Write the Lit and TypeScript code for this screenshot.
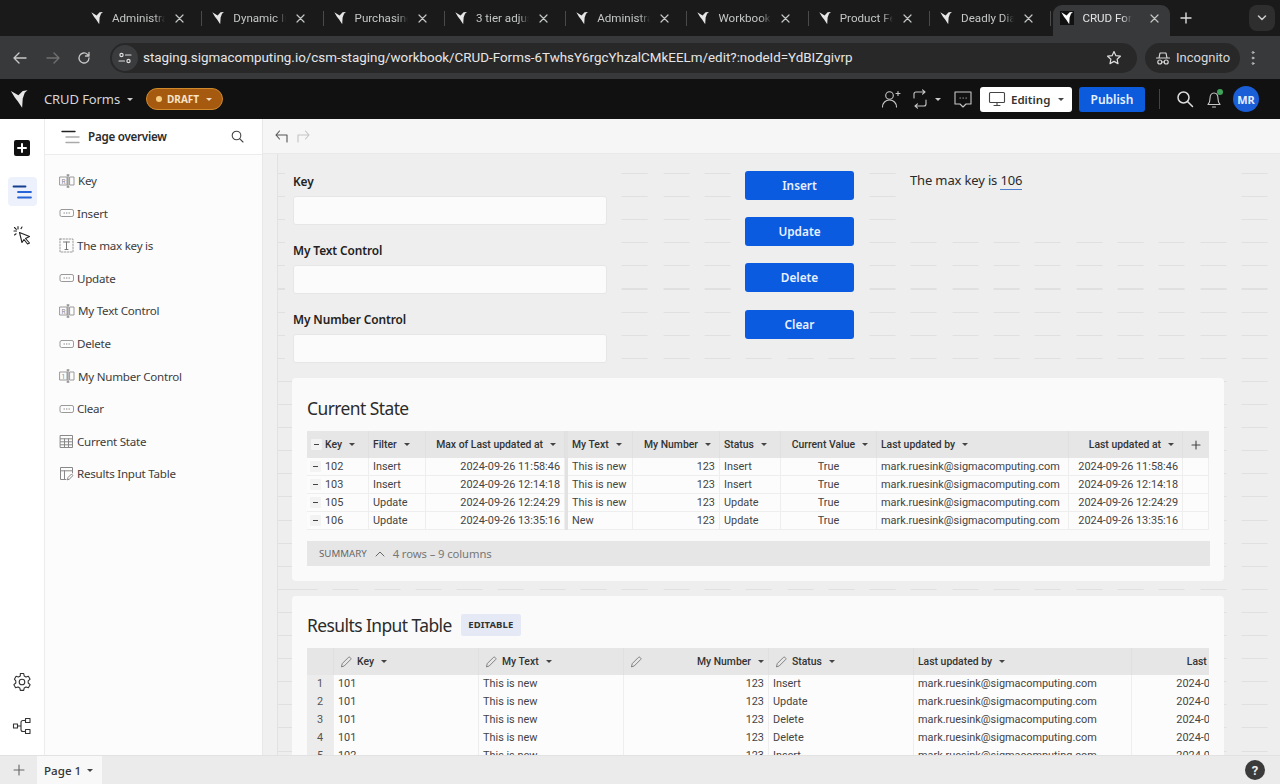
import { LitElement, html, css, svg } from "lit";
import { customElement } from "lit/decorators.js";

const bird = (c = "#e8e8e8", s = 14) => html`<svg width=${s} height=${s} viewBox="0 0 16 16"><path fill=${c} d="M1.500 1.500 7.500 5 11 1.500 14.800 1 12.600 3 11 7.500 10.500 15 7 9.800 4.500 6.500Z"/></svg>`;
const ic = (w: number, h: number, body: unknown, stroke = "currentColor", sw = 1.3) => html`<svg width=${w} height=${h} viewBox="0 0 ${w} ${h}" fill="none" stroke=${stroke} stroke-width=${sw} stroke-linecap="round" stroke-linejoin="round">${body}</svg>`;

const inputIc = (ch: string) => ic(16, 14, svg`<rect x="1" y="3" width="7" height="8" stroke="#9a9a9a" stroke-width="1"/><rect x="11" y="3" width="4" height="8" stroke="#9a9a9a" stroke-width="1"/><path d="M8 1h2M9 1v12M8 13h2" stroke="#777" stroke-width="1"/><text x="2.400" y="9.600" font-size="6.500" fill="#888" stroke="none" font-family="Roboto">${ch}</text>`);
const btnIc = ic(15, 14, svg`<rect x="1" y="3.500" width="13.500" height="7" rx="1.600" stroke="#999" stroke-width="1"/><path d="M5 7h.4M7.500 7h.4M10 7h.4" stroke="#777" stroke-width="1"/>`);
const textIc = ic(15, 15, svg`<rect x="1" y="1" width="13" height="13" stroke="#999" stroke-width="1" stroke-dasharray="1.500 1.500"/><path d="M4.500 4h6M7.500 4v7.500M6 11.500h3" stroke="#777" stroke-width="1"/>`);
const tableIc = ic(15, 15, svg`<rect x="1.500" y="1.500" width="12" height="12" stroke="#888" stroke-width="1"/><path d="M1.500 4.800h12M1.500 7.800h12M1.500 10.800h12M5.500 4.800v8.700M9.500 4.800v8.700" stroke="#888" stroke-width="1"/>`);
const inTableIc = ic(15, 15, svg`<path d="M13.500 7V1.500h-12v12H7M1.500 4.800h12M5.500 4.800v8.700" stroke="#888" stroke-width="1"/><path d="M8.500 13.500l.5-2 3.500-3.500 1.500 1.500-3.500 3.500Z" stroke="#888" stroke-width="1"/>`);
const pencil = ic(12, 12, svg`<path d="M1.500 10.500l.8-3L8.500 1.300a1 1 0 0 1 1.400 0l.8.8a1 1 0 0 1 0 1.400L4.500 9.700Z" stroke="#777" stroke-width=".9"/>`);
const caret = html`<i class="caret"></i>`;
const minus = html`<i class="minus"></i>`;

const tabs = ["Administrat", "Dynamic In", "Purchasing", "3 tier adjus", "Administrat", "Workbook", "Product Fe", "Deadly Dia"];
const navItems: [unknown, string][] = [
  [inputIc("R"), "Key"], [btnIc, "Insert"], [textIc, "The max key is"], [btnIc, "Update"],
  [inputIc("R"), "My Text Control"], [btnIc, "Delete"], [inputIc("1"), "My Number Control"],
  [btnIc, "Clear"], [tableIc, "Current State"], [inTableIc, "Results Input Table"],
];
const mail = "mark.ruesink@sigmacomputing.com";
const stateRows = [
  ["102", "Insert", "2024-09-26 11:58:46", "This is new", "Insert", "2024-09-26 11:58:46"],
  ["103", "Insert", "2024-09-26 12:14:18", "This is new", "Insert", "2024-09-26 12:14:18"],
  ["105", "Update", "2024-09-26 12:24:29", "This is new", "Update", "2024-09-26 12:24:29"],
  ["106", "Update", "2024-09-26 13:35:16", "New", "Update", "2024-09-26 13:35:16"],
];
const inputRows = [
  ["1", "101", "Insert"], ["2", "101", "Update"], ["3", "101", "Delete"], ["4", "101", "Delete"], ["5", "102", "Insert"],
];

@customElement("app-root")
export class AppRoot extends LitElement {
  static styles = css`
    :host { display: block; width: 1280px; height: 784px; overflow: hidden; font-family: "Noto Sans", sans-serif; color: #333; }
    * { box-sizing: border-box; }
    svg { display: block; flex: none; }
    .page { height: 784px; display: flex; flex-direction: column; }

    .tabs { height: 36px; background: #1a1a1b; display: flex; padding: 5px 5px 0 81px; align-items: stretch; flex: none; }
    .tab { width: 121.3px; display: flex; align-items: center; padding: 0 0 5px 9px; color: #c4c7c5; font: 11.6px Roboto, sans-serif; position: relative; }
    .tab.sep::after { content: ""; position: absolute; right: 0; top: 6px; bottom: 10px; width: 1px; background: #4a4a4a; }
    .tab .t { width: 53px; margin-left: 8px; white-space: nowrap; overflow: hidden; -webkit-mask-image: linear-gradient(to right, #000 80%, transparent); mask-image: linear-gradient(to right, #000 80%, transparent); }
    .tab .x { margin-left: 10px; }
    .tab.on { width: 117px; background: #38393b; border-radius: 9px 9px 0 0; color: #e3e3e3; margin-left: 2px; padding-left: 7px; }
    .tab.on .fav { background: #111; }
    .tab.on .t { margin-left: 8px; width: 50px; }
    .tab.on .x { margin-left: 18px; }
    .plus { margin-left: 10px; display: flex; align-items: center; padding-bottom: 5px; color: #ddd; }
    .chev { margin-left: auto; width: 26px; height: 26px; border-radius: 8px; background: #2e2e2f; color: #ccc; display: flex; align-items: center; justify-content: center; }

    .addr { height: 43px; background: #38393b; display: flex; align-items: center; padding: 0 14px 0 12px; color: #c7c7c7; flex: none; }
    .navbtns { display: flex; gap: 16.600px; width: 98px; align-items: center; }
    .pill { height: 30px; background: #282829; border-radius: 15px; display: flex; align-items: center; }
    .url { width: 1027px; padding: 0 15px 0 2px; font: 13.400px Roboto, sans-serif; color: #e6e6e6; }
    .site { width: 26px; height: 26px; border-radius: 50%; background: #3b3c3e; display: flex; align-items: center; justify-content: center; margin-right: 5px; flex: none; }
    .url .u { flex: 1; white-space: nowrap; }
    .inc { margin-left: 8px; width: 95px; padding-left: 10px; gap: 5px; font: 13px Roboto, sans-serif; color: #d8d8d8; }
    .dots { margin-left: 11px; }

    .bar { height: 40px; background: #111; display: flex; align-items: center; padding: 0 21px 0 9px; color: #ddd; flex: none; }
    .wb { margin-left: 15px; font-size: 13px; color: #d6d6d6; letter-spacing: -.1px; }
    .bar .caret { border-top-color: #ccc; }
    .draft { margin-left: 13px; width: 77px; height: 22px; border-radius: 11px; background: #a55a10; border: 1px solid #d08a2c; display: flex; align-items: center; padding-left: 9px; font-size: 10px; font-weight: 700; color: #f6e3c8; gap: 5px; }
    .draft b { width: 6px; height: 6px; border-radius: 50%; background: #f7cd80; }
    .draft .caret { border-top-color: #f0dcc0; margin-left: 2px; }
    .right { margin-left: auto; display: flex; align-items: center; color: #c8c8c8; }
    .edit { width: 92px; height: 25px; background: #fff; border-radius: 3px; margin-left: 7px; display: flex; align-items: center; padding-left: 8px; color: #333; font-size: 11.500px; font-weight: 600; gap: 5px; }
    .edit .caret { border-top-color: #444; margin-left: 3px; }
    .pub { width: 66px; height: 25px; background: #0b5bdc; border-radius: 3px; margin-left: 7px; color: #e8f0ff; font-size: 12px; font-weight: 600; display: flex; align-items: center; justify-content: center; }
    .vsep { width: 1px; height: 20px; background: #444; margin: 0 16px 0 14px; }
    .ava { width: 26px; height: 26px; border-radius: 50%; background: #1a5fd8; color: #e4edff; font: 700 11px "Noto Sans", sans-serif; display: flex; align-items: center; justify-content: center; margin-left: 10px; }
    .bellw { position: relative; margin-left: 11px; }
    .bellw::after { content: ""; position: absolute; right: 0; top: 0; width: 6px; height: 6px; border-radius: 50%; background: #3fa45b; }

    .body { flex: 1; display: flex; min-height: 0; }
    .rail { width: 44px; background: #fff; display: flex; flex-direction: column; align-items: center; padding-top: 21px; flex: none; color: #333; }
    .addb { width: 16px; height: 16px; border-radius: 2px; background: #111; color: #fff; display: flex; align-items: center; justify-content: center; }
    .act { width: 29px; height: 29px; border-radius: 4px; background: #edf1fb; margin-top: 21px; display: flex; align-items: center; justify-content: center; }
    .cur { margin-top: 19px; }
    .grow { flex: 1; }
    .gear { margin-bottom: 24px; }
    .nodes { margin-bottom: 19px; }
    .panel { width: 219px; background: #fcfcfc; border-left: 1px solid #ececec; border-right: 1px solid #e8e8e8; flex: none; }
    .phead { height: 36px; border-bottom: 1px solid #ececec; display: flex; align-items: center; padding: 0 18px 0 16px; background: #fff; }
    .phead .h { margin-left: 8px; font-size: 11.600px; letter-spacing: -.25px; font-weight: 600; color: #2b2b2b; flex: 1; }
    .list { padding: 9.300px 0 0 14px; }
    .item { height: 32.600px; display: flex; align-items: center; gap: 3px; font-size: 11.600px; letter-spacing: -.25px; color: #3c3c3c; }

    .work { flex: 1; display: flex; flex-direction: column; min-width: 0; }
    .tools { height: 35px; background: #f6f6f6; border-bottom: 1px solid #e9e9e9; display: flex; align-items: center; gap: 7px; padding-left: 11px; flex: none; }
    .canvas { flex: 1; min-height: 0; background: #eee; position: relative; overflow: hidden; display: flex; }
    .canvas::before { content: ""; position: absolute; inset: 0; background-image: repeating-linear-gradient(to right, #e0e0e0 0 26px, transparent 26px 41.300px); background-position: 28.600px 0; -webkit-mask-image: repeating-linear-gradient(to bottom, #000 0 1px, transparent 1px 23.100px); mask-image: repeating-linear-gradient(to bottom, #000 0 1px, transparent 1px 23.100px); -webkit-mask-position: 0 19px; mask-position: 0 19px; }
    .strip { width: 15px; background: #f0f0f0; border-right: 1px solid #e2e2e2; flex: none; position: relative; }
    .content { flex: 1; min-width: 0; padding: 6px 56px 0 7px; position: relative; }
    .top { height: 218px; display: flex; align-items: flex-start; }
    .form { width: 330px; height: 212px; background: #eee; padding: 12px 8px 0; display: flex; flex-direction: column; gap: 16px; flex: none; }
    .lab { height: 18px; line-height: 18px; font-size: 11.900px; font-weight: 600; color: #222; letter-spacing: -.1px; margin-bottom: 6px; }
    .inp { height: 29px; width: 314px; background: #fbfbfb; border: 1px solid #e6e6e6; border-radius: 3px; }
    .btns { width: 129px; height: 192px; margin-left: 116px; background: #eee; padding: 11px 6px 0 14px; display: flex; flex-direction: column; gap: 17.200px; flex: none; }
    .btn { height: 29px; width: 109px; background: #0a5be0; border-radius: 3px; color: #e9f0ff; font-size: 11.800px; font-weight: 600; display: flex; align-items: center; justify-content: center; padding-bottom: 1px; }
    .txt { width: 333px; height: 76px; margin-left: 37px; background: #eee; padding: 10px 0 0 13px; font-size: 13px; line-height: 20px; color: #2a2a2a; letter-spacing: -.15px; flex: none; }
    .txt u { text-decoration: none; border-bottom: 1px solid #4d7fd0; display: inline-block; line-height: 18px; }

    .card { margin-left: 7px; background: #fafafa; border-radius: 4px; padding: 0 15px; width: 932px; }
    .c1 { height: 203px; padding-top: 20px; }
    .c2 { margin-top: 15px; padding-top: 17px; height: 200px; overflow: hidden; }
    .title { height: 20px; line-height: 20px; font-size: 17.400px; color: #2b2b2b; letter-spacing: -.55px; margin-bottom: 13px; display: flex; align-items: center; }
    .c2 .title { margin-bottom: 11px; height: 24px; }
    .chip { margin-left: 9px; width: 60px; height: 22px; background: #e5e9f5; border-radius: 2px; font-size: 9.500px; font-weight: 700; color: #333; display: flex; align-items: center; justify-content: center; letter-spacing: .1px; }

    .tb { font: 10.900px Roboto, sans-serif; color: #444; width: 902px; overflow: hidden; }
    .r { display: grid; }
    .s .r { grid-template-columns: 62px 57px 139px 3px 65px 87px 61px 96px 192px 114px 26px; }
    .i .r { grid-template-columns: 27px 145px 145px 145px 145px 218px 149px; width: 1174px; }
    .hd { height: 27px; background: #e6e6e6; }
    .hd > div { display: flex; align-items: center; font-weight: 500; font-size: 10.400px; color: #333; border-right: 1px solid #e0e0e0; padding: 0 4px; white-space: nowrap; gap: 7px; }
    .row { height: 18px; }
    .row > div { background: #fcfcfc; border-right: 1px solid #eee; border-bottom: 1px solid #eee; line-height: 17px; padding: 0 4px; white-space: nowrap; }
    .i .row > div { line-height: 18px; }
    .row > .fz, .hd > .fz { background: #e2e2e2; border: 0; padding: 0; }
    .ra { text-align: right; }
    .hd > .ra { justify-content: flex-end; padding-right: 8px; }
    .ce { text-align: center; }
    .row > .idx { background: #ececec; text-align: center; color: #555; padding: 0; }
    .hd > .pl { gap: 0; padding-left: 6px; }
    .pl svg { margin-right: 5px; }
    .caret { display: inline-block; width: 0; height: 0; border-left: 3px solid transparent; border-right: 3px solid transparent; border-top: 3.500px solid #444; flex: none; }
    .pl .caret { margin-left: 7px; }
    .minus { display: inline-block; width: 11px; height: 11px; background: #f3f3f3; position: relative; flex: none; border-radius: 1px; }
    .minus::after { content: ""; position: absolute; left: 3px; right: 3px; top: 5px; height: 1px; background: #444; }
    .kcell { display: flex; align-items: center; gap: 4px; padding-left: 3px !important; }
    .hd > .khd { padding-left: 4px; gap: 3px; }
    .hd > .khd .caret { margin-left: 4px; }
    .sum { margin-top: 11px; height: 25px; width: 903px; background: #e6e6e6; display: flex; align-items: center; padding-left: 12px; font-size: 9.700px; color: #666; }
    .sum .n { font-size: 11.300px; color: #777; letter-spacing: -.1px; margin-left: 2px; }
    .sum svg { margin: 0 6px 0 8px; }
    .plusc { justify-content: center; border: 0 !important; }

    .foot { height: 29px; background: #ebebeb; border-top: 1px solid #e2e2e2; display: flex; align-items: stretch; flex: none; position: relative; }
    .fp { width: 37px; display: flex; align-items: center; justify-content: center; color: #666; }
    .pg { width: 65px; background: #f8f8f8; display: flex; align-items: center; padding-left: 7px; gap: 6px; font-size: 11.600px; font-weight: 500; color: #333; }
    .help { margin: 4px 15px 0 auto; width: 20px; height: 20px; border-radius: 50%; background: #3b3b3b; color: #eee; font: 700 13px Roboto, sans-serif; display: flex; align-items: center; justify-content: center; }
  `;

  private fav(active = false) {
    return html`<span class="fav">${bird(active ? "#fff" : "#e6e6e6", 14)}</span>`;
  }

  render() {
    const xIc = ic(9, 9, svg`<path d="M1 1l7 7M8 1l-7 7"/>`, "#c4c7c5", 1.200);
    return html`<div class="page">
      <div class="tabs">
        ${tabs.map((t) => html`<div class="tab sep">${this.fav()}<span class="t">${t}</span><span class="x">${xIc}</span></div>`)}
        <div class="tab on">${this.fav(true)}<span class="t">CRUD Forms</span><span class="x">${xIc}</span></div>
        <div class="plus">${ic(12, 12, svg`<path d="M6 1v10M1 6h10"/>`, "#ddd", 1.400)}</div>
        <div class="chev">${ic(10, 6, svg`<path d="M1.500 1 5 4.500 8.500 1"/>`, "#ccc", 1.500)}</div>
      </div>

      <div class="addr">
        <div class="navbtns">
          ${ic(16, 14, svg`<path d="M14 7H2M7 2 2 7l5 5"/>`, "#c7c7c7", 1.400)}
          ${ic(16, 14, svg`<path d="M2 7h12M9 2l5 5-5 5"/>`, "#707070", 1.400)}
          ${ic(14, 14, svg`<path d="M12 7a5 5 0 1 1-1.500-3.600L12 5M12 1.500V5H8.500"/>`, "#c7c7c7", 1.300)}
        </div>
        <div class="pill url">
          <span class="site">${ic(14, 12, svg`<circle cx="3.500" cy="3" r="1.600"/><path d="M7.500 3H13M1 9h5.500"/><circle cx="10.500" cy="9" r="1.600"/>`, "#ddd", 1.200)}</span>
          <span class="u">staging.sigmacomputing.io/csm-staging/workbook/CRUD-Forms-6TwhsY6rgcYhzalCMkEELm/edit?:nodeId=YdBIZgivrp</span>
          ${ic(16, 16, svg`<path d="M8 1.600l1.900 4.100 4.500.5-3.300 3 .9 4.400L8 11.400l-4 2.200.9-4.400-3.300-3 4.500-.5Z"/>`, "#ddd", 1.200)}
        </div>
        <div class="pill inc">
          ${ic(16, 16, svg`<path d="M1.500 8h13M4 8l1-5h6l1 5"/><circle cx="4.800" cy="12" r="2"/><circle cx="11.200" cy="12" r="2"/><path d="M6.800 12h2.400"/>`, "#d8d8d8", 1.200)}
          <span>Incognito</span>
        </div>
        <div class="dots">${ic(4, 16, svg`<circle cx="2" cy="2.500" r=".9"/><circle cx="2" cy="8" r=".9"/><circle cx="2" cy="13.500" r=".9"/>`, "#c7c7c7", 1)}</div>
      </div>

      <div class="bar">
        ${bird("#e6e6e6", 20)}
        <span class="wb">CRUD Forms</span>
        <i class="caret" style="margin-left:7px"></i>
        <div class="draft"><b></b>DRAFT${caret}</div>
        <div class="right">
          ${ic(20, 20, svg`<circle cx="8.500" cy="6.500" r="3.800"/><path d="M1.500 18c0-4 3-7 7-7s7 3 7 7M15 4.500h4M17 2.500v4"/>`, "#c8c8c8", 1.100)}
          <span style="width:9px"></span>
          ${ic(20, 20, svg`<path d="M4 9V5a2 2 0 0 1 2-2h9M12.500 .8 15 3l-2.500 2.200M16 11v4a2 2 0 0 1-2 2H5M7.500 14.800 5 17l2.500 2.200"/>`, "#c8c8c8", 1.100)}
          <i class="caret" style="margin-left:5px;border-top-color:#ccc"></i>
          <span style="width:12px"></span>
          ${ic(20, 20, svg`<path d="M2 3h16v12h-5l-3 3-3-3H2Z"/><path d="M7 9h.3M10 9h.3M13 9h.3"/>`, "#c8c8c8", 1.100)}
          <div class="edit">
            ${ic(18, 16, svg`<rect x="1.500" y="1.500" width="15" height="10" rx="1"/><path d="M6 14.500h6M9 11.500v3"/>`, "#444", 1.100)}
            <span>Editing</span>${caret}
          </div>
          <div class="pub">Publish</div>
          <div class="vsep"></div>
          ${ic(18, 18, svg`<circle cx="7.500" cy="7.500" r="5.500"/><path d="M11.500 11.500 16.500 16.500"/>`, "#ddd", 1.500)}
          <div class="bellw">${ic(18, 20, svg`<path d="M3 15.500c1.500-1.500 2-3 2-6 0-3 1.500-5.500 4-5.500s4 2.500 4 5.500c0 3 .5 4.500 2 6ZM7.500 18h3"/>`, "#c8c8c8", 1.100)}</div>
          <div class="ava">MR</div>
        </div>
      </div>

      <div class="body">
        <div class="rail">
          <div class="addb">${ic(10, 10, svg`<path d="M5 1v8M1 5h8"/>`, "#fff", 2)}</div>
          <div class="act">${ic(20, 14, svg`<path d="M1.500 1.500h12" stroke="#143f91"/><path d="M6 7h13M6 12.500h13" stroke="#2764d8"/>`, "#2764d8", 1.800)}</div>
          <div class="cur">${ic(20, 20, svg`<path d="M7.500 7.500 17.500 11.500 13.500 13.500 17.500 18 15.500 19 12 14.500 10 17.500Z"/><path d="M2 6h2.500M6 1.500V4M2.500 2.500l1.800 1.800M2.500 10l1.600-1.200M10 2l-1 1.600"/>`, "#222", 1.100)}</div>
          <div class="grow"></div>
          <div class="gear">${ic(20, 20, svg`<path d="M8.300 1.500h3.400l.5 2.500 1.800 1 2.400-.8 1.700 3-1.900 1.700v2.100l1.900 1.700-1.700 3-2.400-.8-1.800 1-.5 2.500H8.300l-.5-2.500-1.800-1-2.400.8-1.700-3 1.900-1.700V8.900L2.400 7.200l1.700-3 2.400.8 1.800-1Z"/><circle cx="10" cy="10" r="2.800"/>`, "#333", 1.100)}</div>
          <div class="nodes">${ic(20, 20, svg`<rect x="1.500" y="8" width="4" height="4"/><rect x="13.500" y="2.500" width="4.500" height="4"/><rect x="13.500" y="13.500" width="4.500" height="4"/><path d="M5.500 10H9M13.500 4.500H11a2 2 0 0 0-2 2v7a2 2 0 0 0 2 2h2.500"/>`, "#333", 1.100)}</div>
        </div>

        <div class="panel">
          <div class="phead">
            ${ic(19, 14, svg`<path d="M1 1.500h13" stroke="#222"/><path d="M5 7h13M5 12.500h13" stroke="#aaa"/>`, "#aaa", 1.400)}
            <span class="h">Page overview</span>
            ${ic(13, 13, svg`<circle cx="5.500" cy="5.500" r="4.300"/><path d="M8.800 8.800 12 12"/>`, "#444", 1.100)}
          </div>
          <div class="list">
            ${navItems.map(([i, t]) => html`<div class="item">${i}<span>${t}</span></div>`)}
          </div>
        </div>

        <div class="work">
          <div class="tools">
            ${ic(15, 14, svg`<path d="M13 13V6H2M5.500 2 2 6l3.500 4"/>`, "#555", 1.100)}
            ${ic(15, 14, svg`<path d="M2 13V6h11M9.500 2 13 6l-3.500 4"/>`, "#c4c4c4", 1.100)}
          </div>
          <div class="canvas">
            <div class="strip"></div>
            <div class="content">
              <div class="top">
                <div class="form">
                  ${["Key", "My Text Control", "My Number Control"].map((l) => html`<div><div class="lab">${l}</div><div class="inp"></div></div>`)}
                </div>
                <div class="btns">
                  ${["Insert", "Update", "Delete", "Clear"].map((b) => html`<div class="btn">${b}</div>`)}
                </div>
                <div class="txt">The max key is <u>106</u></div>
              </div>

              <div class="card c1">
                <div class="title">Current State</div>
                <div class="tb s">
                  <div class="r hd">
                    <div class="khd">${minus}<span>Key</span>${caret}</div>
                    <div>Filter${caret}</div>
                    <div class="ra">Max of Last updated at${caret}</div>
                    <div class="fz"></div>
                    <div>My Text${caret}</div>
                    <div class="ra">My Number${caret}</div>
                    <div>Status${caret}</div>
                    <div class="ra">Current Value${caret}</div>
                    <div>Last updated by${caret}</div>
                    <div class="ra">Last updated at${caret}</div>
                    <div class="plusc">${ic(10, 10, svg`<path d="M5 1v8M1 5h8"/>`, "#444", 1.100)}</div>
                  </div>
                  ${stateRows.map((r) => html`<div class="r row">
                    <div class="kcell">${minus}${r[0]}</div>
                    <div>${r[1]}</div>
                    <div class="ra">${r[2]}</div>
                    <div class="fz"></div>
                    <div>${r[3]}</div>
                    <div class="ra">123</div>
                    <div>${r[4]}</div>
                    <div class="ce">True</div>
                    <div>${mail}</div>
                    <div class="ra">${r[5]}</div>
                    <div></div>
                  </div>`)}
                </div>
                <div class="sum">
                  <span>SUMMARY</span>
                  ${ic(10, 6, svg`<path d="M1 5 5 1l4 4"/>`, "#666", 1)}
                  <span class="n">4 rows – 9 columns</span>
                </div>
              </div>

              <div class="card c2">
                <div class="title">Results Input Table<span class="chip">EDITABLE</span></div>
                <div class="tb i">
                  <div class="r hd">
                    <div></div>
                    <div class="pl">${pencil}Key${caret}</div>
                    <div class="pl">${pencil}My Text${caret}</div>
                    <div class="pl">${pencil}<span style="margin-left:auto">My Number</span>${caret}</div>
                    <div class="pl">${pencil}Status${caret}</div>
                    <div>Last updated by${caret}</div>
                    <div class="ra">Last updated at${caret}</div>
                  </div>
                  ${inputRows.map((r) => html`<div class="r row">
                    <div class="idx">${r[0]}</div>
                    <div>${r[1]}</div>
                    <div>This is new</div>
                    <div class="ra">123</div>
                    <div>${r[2]}</div>
                    <div>${mail}</div>
                    <div class="ra">2024-09-26 12:14:18</div>
                  </div>`)}
                </div>
              </div>
            </div>
          </div>
        </div>
      </div>

      <div class="foot">
        <div class="fp">${ic(12, 12, svg`<path d="M6 1v10M1 6h10"/>`, "#666", 1.100)}</div>
        <div class="pg"><span>Page 1</span>${caret}</div>
        <div class="help">?</div>
      </div>
    </div>`;
  }
}
